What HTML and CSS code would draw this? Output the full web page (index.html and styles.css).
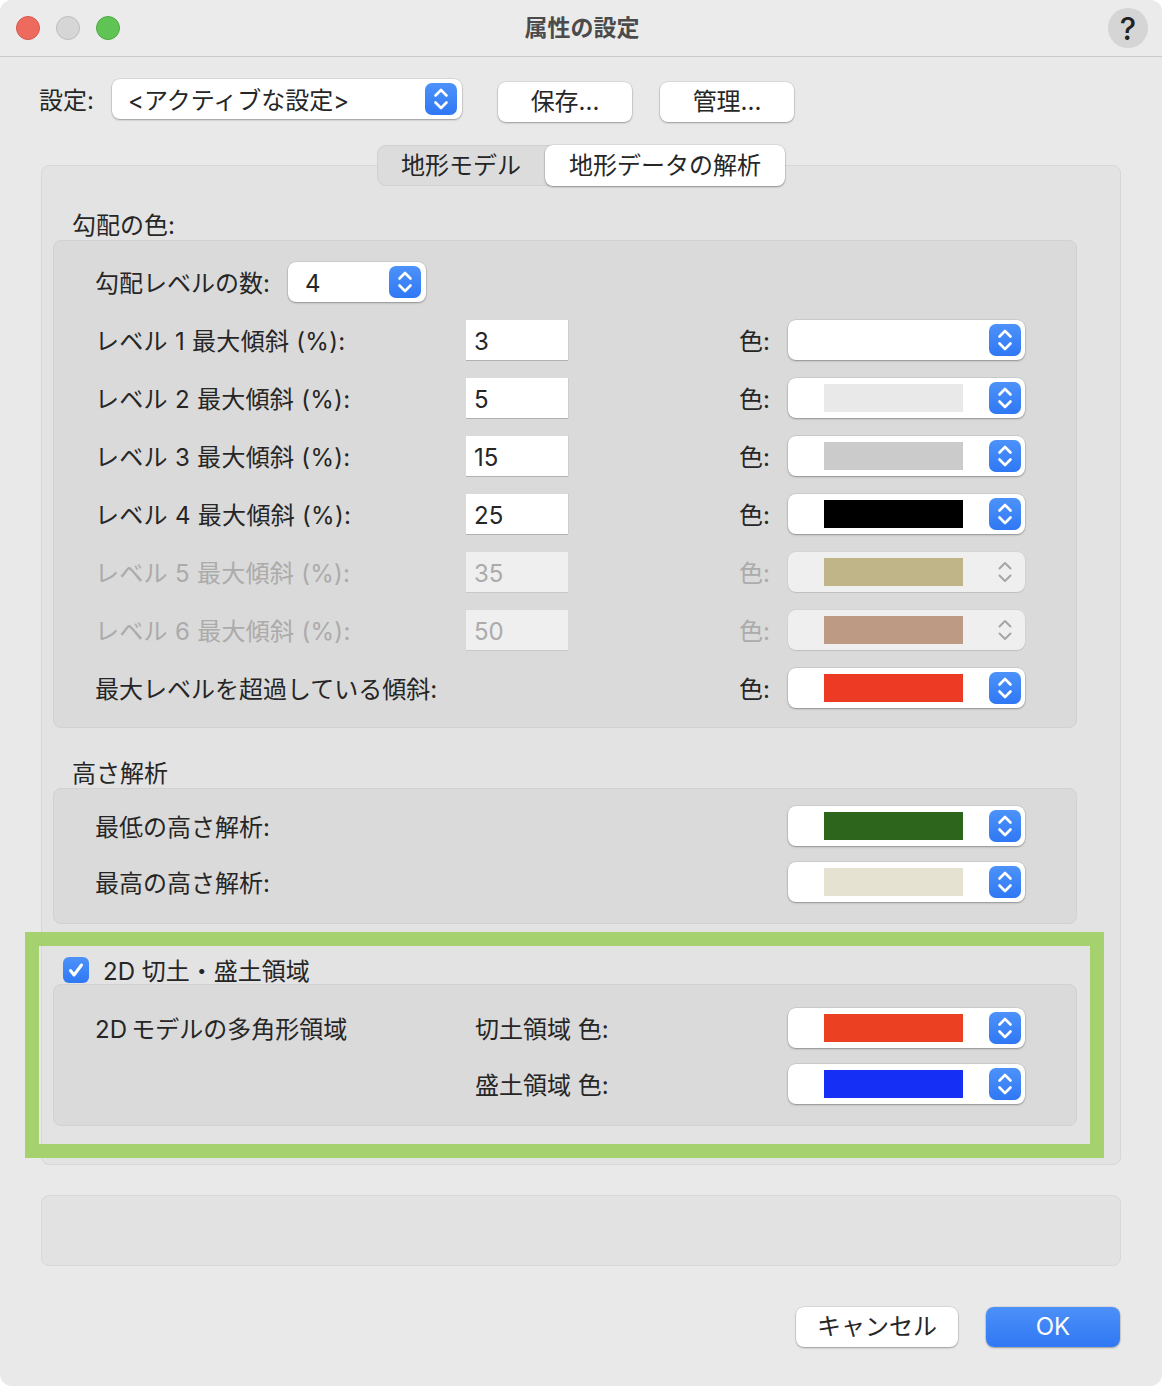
FILE: index.html
```html
<!DOCTYPE html>
<html lang="ja">
<head>
<meta charset="UTF-8">
<meta name="viewport" content="width=device-width, initial-scale=1.0">
<title>属性の設定</title>
<link rel="stylesheet" href="styles.css">
</head>
<body>
<div class="window">
    <header class="titlebar">
        <div class="lights">
            <span class="light red"></span>
            <span class="light gray"></span>
            <span class="light green"></span>
        </div>
        <div class="title">属性の設定</div>
        <div class="help-wrap"><span class="help">?</span></div>
    </header>

    <div class="settings">
        <span class="settings-label">設定:</span>
        <div class="popup popup-settings">
            <span class="popup-text">&lt;アクティブな設定&gt;</span>
            <span class="stepper"><svg viewBox="0 0 32 32" width="32" height="32"><path d="M10.5 12.5 16 7l5.5 5.5M10.5 19.5 16 25l5.5-5.5"/></svg></span>
        </div>
        <button class="btn btn-save">保存...</button>
        <button class="btn btn-manage">管理...</button>
    </div>

    <div class="tabs">
        <div class="segment">
            <span class="tab">地形モデル</span>
            <span class="tab selected">地形データの解析</span>
        </div>
    </div>

    <div class="tabbox">
        <div class="section-title">勾配の色:</div>
        <div class="group group-slope">
            <div class="row">
                <span class="txt count-label">勾配レベルの数:</span>
                <div class="popup popup-count">
                    <span class="popup-text">4</span>
                    <span class="stepper"><svg viewBox="0 0 32 32" width="32" height="32"><path d="M10.5 12.5 16 7l5.5 5.5M10.5 19.5 16 25l5.5-5.5"/></svg></span>
                </div>
            </div>
            <div class="row">
                <span class="txt level-label">レベル 1 最大傾斜 (%):</span>
                <span class="field">3</span>
                <span class="txt clr">色:</span>
                <div class="popup color"><span class="swatch" style="background:#ffffff"></span><span class="stepper"><svg viewBox="0 0 32 32" width="32" height="32"><path d="M10.5 12.5 16 7l5.5 5.5M10.5 19.5 16 25l5.5-5.5"/></svg></span></div>
            </div>
            <div class="row">
                <span class="txt level-label">レベル 2 最大傾斜 (%):</span>
                <span class="field">5</span>
                <span class="txt clr">色:</span>
                <div class="popup color"><span class="swatch" style="background:#e9e9e9"></span><span class="stepper"><svg viewBox="0 0 32 32" width="32" height="32"><path d="M10.5 12.5 16 7l5.5 5.5M10.5 19.5 16 25l5.5-5.5"/></svg></span></div>
            </div>
            <div class="row">
                <span class="txt level-label">レベル 3 最大傾斜 (%):</span>
                <span class="field">15</span>
                <span class="txt clr">色:</span>
                <div class="popup color"><span class="swatch" style="background:#cbcbcb"></span><span class="stepper"><svg viewBox="0 0 32 32" width="32" height="32"><path d="M10.5 12.5 16 7l5.5 5.5M10.5 19.5 16 25l5.5-5.5"/></svg></span></div>
            </div>
            <div class="row">
                <span class="txt level-label">レベル 4 最大傾斜 (%):</span>
                <span class="field">25</span>
                <span class="txt clr">色:</span>
                <div class="popup color"><span class="swatch" style="background:#000000"></span><span class="stepper"><svg viewBox="0 0 32 32" width="32" height="32"><path d="M10.5 12.5 16 7l5.5 5.5M10.5 19.5 16 25l5.5-5.5"/></svg></span></div>
            </div>
            <div class="row disabled">
                <span class="txt level-label">レベル 5 最大傾斜 (%):</span>
                <span class="field">35</span>
                <span class="txt clr">色:</span>
                <div class="popup color"><span class="swatch" style="background:#c0b489"></span><span class="stepper"><svg viewBox="0 0 32 32" width="32" height="32"><path d="M10.5 12.5 16 7l5.5 5.5M10.5 19.5 16 25l5.5-5.5"/></svg></span></div>
            </div>
            <div class="row disabled">
                <span class="txt level-label">レベル 6 最大傾斜 (%):</span>
                <span class="field">50</span>
                <span class="txt clr">色:</span>
                <div class="popup color"><span class="swatch" style="background:#bc9a84"></span><span class="stepper"><svg viewBox="0 0 32 32" width="32" height="32"><path d="M10.5 12.5 16 7l5.5 5.5M10.5 19.5 16 25l5.5-5.5"/></svg></span></div>
            </div>
            <div class="row">
                <span class="txt">最大レベルを超過している傾斜:</span>
                <span class="txt clr">色:</span>
                <div class="popup color"><span class="swatch" style="background:#ec3a24"></span><span class="stepper"><svg viewBox="0 0 32 32" width="32" height="32"><path d="M10.5 12.5 16 7l5.5 5.5M10.5 19.5 16 25l5.5-5.5"/></svg></span></div>
            </div>
        </div>

        <div class="section-title section-gap">高さ解析</div>
        <div class="group group-height">
            <div class="row">
                <span class="txt">最低の高さ解析:</span>
                <div class="popup color push"><span class="swatch" style="background:#2c651b"></span><span class="stepper"><svg viewBox="0 0 32 32" width="32" height="32"><path d="M10.5 12.5 16 7l5.5 5.5M10.5 19.5 16 25l5.5-5.5"/></svg></span></div>
            </div>
            <div class="row">
                <span class="txt">最高の高さ解析:</span>
                <div class="popup color push"><span class="swatch" style="background:#e6e2d2"></span><span class="stepper"><svg viewBox="0 0 32 32" width="32" height="32"><path d="M10.5 12.5 16 7l5.5 5.5M10.5 19.5 16 25l5.5-5.5"/></svg></span></div>
            </div>
        </div>

        <div class="checkrow">
            <span class="checkbox"><svg viewBox="0 0 26 26" width="26" height="26"><path d="M7.5 13.5 11 18l7.5-10"/></svg></span>
            <span class="txt">2D 切土・盛土領域</span>
        </div>
        <div class="group group-cut">
            <div class="row">
                <span class="txt cut-label">2D&thinsp;モデルの多角形領域</span>
                <span class="txt">切土領域 色:</span>
                <div class="popup color push"><span class="swatch" style="background:#ec4023"></span><span class="stepper"><svg viewBox="0 0 32 32" width="32" height="32"><path d="M10.5 12.5 16 7l5.5 5.5M10.5 19.5 16 25l5.5-5.5"/></svg></span></div>
            </div>
            <div class="row">
                <span class="txt cut-label"></span>
                <span class="txt">盛土領域 色:</span>
                <div class="popup color push"><span class="swatch" style="background:#1530f4"></span><span class="stepper"><svg viewBox="0 0 32 32" width="32" height="32"><path d="M10.5 12.5 16 7l5.5 5.5M10.5 19.5 16 25l5.5-5.5"/></svg></span></div>
            </div>
        </div>
    </div>

    <div class="infobox"></div>

    <div class="footer">
        <button class="btn btn-cancel">キャンセル</button>
        <button class="btn btn-ok">OK</button>
    </div>

    <div class="highlight"></div>
</div>
</body>
</html>
```

FILE: styles.css
```css
body {
    margin: 0;
    padding: 0;
    background-color: #fff;
}

.window {
    position: relative;
    width: 1162px;
    height: 1386px;
    background-color: #e9e9e9;
    border-radius: 12px;
    overflow: hidden;
    font-family: Inter, "Noto Sans CJK JP", sans-serif;
    font-size: 24px;
    line-height: 1;
    color: #262626;
}

/* title bar */
.titlebar {
    height: 57px;
    box-sizing: border-box;
    border-bottom: 1px solid #cbcbcb;
    background-color: #ebebeb;
    display: grid;
    grid-template-columns: 1fr auto 1fr;
    align-items: center;
    padding: 0 14px 0 16px;
}

.lights {
    display: flex;
    gap: 16px;
}

.light {
    width: 24px;
    height: 24px;
    border-radius: 50%;
    box-sizing: border-box;
}

.light.red {
    background-color: #ee6a5f;
    border: 1px solid #d8574c;
}

.light.gray {
    background-color: #d6d6d6;
    border: 1px solid #bdbdbd;
}

.light.green {
    background-color: #5fc454;
    border: 1px solid #4fa842;
}

.title {
    font-weight: 700;
    font-size: 23px;
    color: #4b4b4b;
}

.help-wrap {
    display: flex;
    justify-content: flex-end;
}

.help {
    width: 40px;
    height: 40px;
    border-radius: 50%;
    background-color: #d5d5d5;
    display: flex;
    align-items: center;
    justify-content: center;
    font-size: 31px;
    font-weight: 500;
    color: #222;
}

/* text nudged to sit on the same line as the controls */
.txt,
.popup-text,
.settings-label,
.section-title,
.field {
    padding-top: 3px;
}

/* settings row */
.settings {
    display: flex;
    align-items: flex-start;
    margin-top: 22px;
    padding-left: 39px;
    height: 43px;
}

.settings-label {
    width: 73px;
    height: 40px;
    box-sizing: border-box;
    display: flex;
    align-items: center;
}

.popup {
    display: flex;
    align-items: center;
    height: 40px;
    box-sizing: border-box;
    background-color: #fff;
    border-radius: 8px;
    box-shadow: 0 0 0 0.5px rgba(0, 0, 0, 0.12), 0 1px 2px rgba(0, 0, 0, 0.3);
}

.popup-text {
    flex: 1;
}

.popup-settings {
    width: 350px;
    padding: 0 5px 0 16px;
}

.popup-count {
    width: 138px;
    padding: 0 5px 0 17px;
}

.stepper {
    margin-left: auto;
    width: 32px;
    height: 32px;
    border-radius: 7px;
    background: linear-gradient(#4d92fa, #2f78f4);
    display: flex;
}

.stepper svg path {
    fill: none;
    stroke: #fff;
    stroke-width: 2.6;
    stroke-linecap: round;
    stroke-linejoin: round;
}

.btn {
    margin-top: 3px;
    height: 40px;
    width: 134px;
    padding: 0 0 1px;
    border: none;
    border-radius: 8px;
    background-color: #fff;
    box-shadow: 0 0 0 0.5px rgba(0, 0, 0, 0.12), 0 1px 2px rgba(0, 0, 0, 0.3);
    font-family: inherit;
    font-size: 24px;
    line-height: 1;
    color: #262626;
}

.btn-save {
    margin-left: 36px;
}

.btn-manage {
    margin-left: 28px;
}

/* tabs */
.tabs {
    position: relative;
    z-index: 1;
    display: flex;
    justify-content: center;
    margin-top: 23px;
    margin-bottom: -21px;
}

.segment {
    display: flex;
    height: 41px;
    background-color: #dcdcdc;
    border-radius: 9px;
    box-shadow: inset 0 0 0 1px #d1d1d1;
}

.tab {
    width: 168px;
    display: flex;
    align-items: center;
    justify-content: center;
}

.tab.selected {
    width: 240px;
    background-color: #fff;
    border-radius: 8px;
    box-shadow: 0 0 0 0.5px rgba(0, 0, 0, 0.1), 0 1px 2px rgba(0, 0, 0, 0.35);
}

.tabbox {
    margin: 0 41px;
    background-color: #e3e3e3;
    border: 1px solid #d7d7d7;
    border-radius: 8px;
    padding: 42px 43px 38px 11px;
}

.section-title {
    height: 32px;
    box-sizing: border-box;
    display: flex;
    align-items: center;
    padding-left: 19px;
}

.section-gap {
    margin-top: 28px;
}

.group {
    display: flex;
    flex-direction: column;
    background-color: #dadada;
    border: 1px solid #d1d1d1;
    border-radius: 8px;
}

.group-slope {
    padding: 21px 51px 19px 41px;
    gap: 18px;
}

.group-height {
    padding: 17px 51px 21px 41px;
    gap: 16px;
}

.group-cut {
    padding: 23px 51px 21px 41px;
    gap: 16px;
}

.row {
    display: flex;
    align-items: center;
    height: 40px;
}

.count-label {
    width: 193px;
}

.level-label {
    width: 371px;
    letter-spacing: 0.3px;
}

.cut-label {
    width: 380px;
}

.field {
    width: 102px;
    height: 40px;
    box-sizing: border-box;
    padding-left: 8px;
    display: flex;
    align-items: center;
    background-color: #fff;
    box-shadow: 0 1px 0 rgba(0, 0, 0, 0.18), 1px 0 0 rgba(0, 0, 0, 0.05);
}

.clr {
    margin-left: auto;
    margin-right: 18px;
}

.color {
    width: 237px;
    padding: 0 4px 0 36px;
}

.push {
    margin-left: auto;
}

.swatch {
    width: 139px;
    height: 28px;
}

.row.disabled {
    color: #ababab;
}

.row.disabled .field {
    background-color: #efefef;
    box-shadow: 0 1px 0 rgba(0, 0, 0, 0.08);
}

.row.disabled .color {
    background-color: #efefef;
    box-shadow: 0 0 0 0.5px rgba(0, 0, 0, 0.06), 0 1px 1px rgba(0, 0, 0, 0.1);
}

.row.disabled .stepper {
    background: none;
}

.row.disabled .stepper svg path {
    stroke: #a6a6a6;
    stroke-width: 2;
}

/* checkbox section */
.checkrow {
    display: flex;
    align-items: center;
    gap: 14px;
    height: 28px;
    margin-top: 32px;
    padding-left: 10px;
}

.checkbox {
    width: 26px;
    height: 26px;
    border-radius: 6px;
    background: linear-gradient(#4d92fa, #2f78f4);
    display: flex;
}

.checkbox svg path {
    fill: none;
    stroke: #fff;
    stroke-width: 3;
    stroke-linecap: round;
    stroke-linejoin: round;
}

.infobox {
    margin: 30px 41px 0;
    height: 71px;
    box-sizing: border-box;
    background-color: #e2e2e2;
    border: 1px solid #d8d8d8;
    border-radius: 8px;
}

.footer {
    display: flex;
    justify-content: flex-end;
    gap: 28px;
    margin-top: 41px;
    padding-right: 42px;
}

.footer .btn {
    margin-top: 0;
}

.btn-cancel {
    width: 162px;
}

.btn-ok {
    background: linear-gradient(#4c90f9, #3078f4);
    color: #fff;
}

/* annotation frame */
.highlight {
    position: absolute;
    left: 25px;
    top: 932px;
    width: 1079px;
    height: 226px;
    box-sizing: border-box;
    border: 14px solid #a5d16f;
    pointer-events: none;
}
```
